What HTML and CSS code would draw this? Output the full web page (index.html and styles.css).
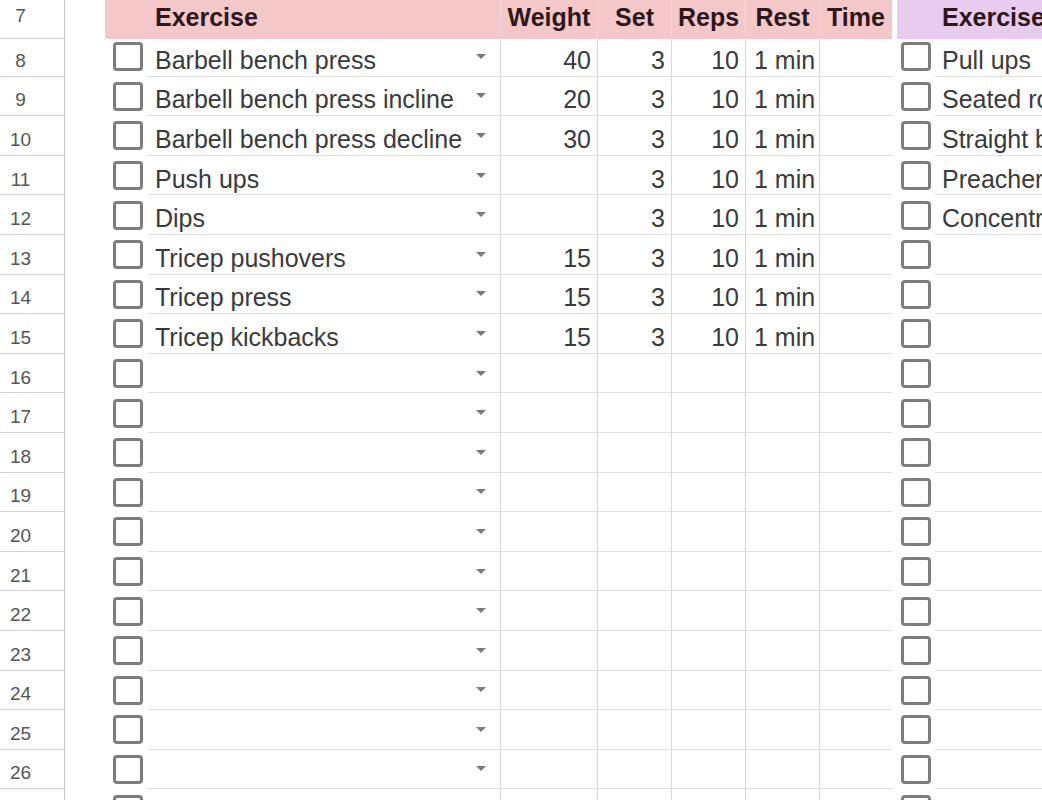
FILE: index.html
```html
<!DOCTYPE html>
<html>
<head>
<meta charset="utf-8">
<link rel="stylesheet" href="styles.css">
</head>
<body>
<div class="sheet">
  <div class="row head">
    <div class="rh"><span class="t">7</span></div>
    <div class="gap"></div>
    <div class="h pink cbh"></div>
    <div class="h pink exh"><span>Exercise</span></div>
    <div class="h pink ctr">Weight</div>
    <div class="h pink ctr">Set</div>
    <div class="h pink ctr">Reps</div>
    <div class="h pink ctr">Rest</div>
    <div class="h pink ctr last">Time</div>
    <div class="gap"></div>
    <div class="h lav cbh"></div>
    <div class="h lav exh"><span>Exercise</span></div>
  </div>

  <div class="row">
    <div class="rh"><span class="t">8</span></div><div class="gap"></div>
    <div class="cb"><span class="box"></span></div>
    <div class="c ex"><span class="t">Barbell bench press</span><span class="dd"></span></div>
    <div class="c num"><span class="t">40</span></div><div class="c num"><span class="t">3</span></div><div class="c num"><span class="t">10</span></div>
    <div class="c txt"><span class="t">1 min</span></div><div class="c time"></div><div class="gap"></div>
    <div class="cb"><span class="box"></span></div><div class="c ex2"><span class="t">Pull ups</span></div>
  </div>
  <div class="row">
    <div class="rh"><span class="t">9</span></div><div class="gap"></div>
    <div class="cb"><span class="box"></span></div>
    <div class="c ex"><span class="t">Barbell bench press incline</span><span class="dd"></span></div>
    <div class="c num"><span class="t">20</span></div><div class="c num"><span class="t">3</span></div><div class="c num"><span class="t">10</span></div>
    <div class="c txt"><span class="t">1 min</span></div><div class="c time"></div><div class="gap"></div>
    <div class="cb"><span class="box"></span></div><div class="c ex2"><span class="t">Seated row</span></div>
  </div>
  <div class="row">
    <div class="rh"><span class="t">10</span></div><div class="gap"></div>
    <div class="cb"><span class="box"></span></div>
    <div class="c ex"><span class="t">Barbell bench press decline</span><span class="dd"></span></div>
    <div class="c num"><span class="t">30</span></div><div class="c num"><span class="t">3</span></div><div class="c num"><span class="t">10</span></div>
    <div class="c txt"><span class="t">1 min</span></div><div class="c time"></div><div class="gap"></div>
    <div class="cb"><span class="box"></span></div><div class="c ex2"><span class="t">Straight bar curl</span></div>
  </div>
  <div class="row">
    <div class="rh"><span class="t">11</span></div><div class="gap"></div>
    <div class="cb"><span class="box"></span></div>
    <div class="c ex"><span class="t">Push ups</span><span class="dd"></span></div>
    <div class="c num"></div><div class="c num"><span class="t">3</span></div><div class="c num"><span class="t">10</span></div>
    <div class="c txt"><span class="t">1 min</span></div><div class="c time"></div><div class="gap"></div>
    <div class="cb"><span class="box"></span></div><div class="c ex2"><span class="t">Preacher curl</span></div>
  </div>
  <div class="row">
    <div class="rh"><span class="t">12</span></div><div class="gap"></div>
    <div class="cb"><span class="box"></span></div>
    <div class="c ex"><span class="t">Dips</span><span class="dd"></span></div>
    <div class="c num"></div><div class="c num"><span class="t">3</span></div><div class="c num"><span class="t">10</span></div>
    <div class="c txt"><span class="t">1 min</span></div><div class="c time"></div><div class="gap"></div>
    <div class="cb"><span class="box"></span></div><div class="c ex2"><span class="t">Concentration curl</span></div>
  </div>
  <div class="row">
    <div class="rh"><span class="t">13</span></div><div class="gap"></div>
    <div class="cb"><span class="box"></span></div>
    <div class="c ex"><span class="t">Tricep pushovers</span><span class="dd"></span></div>
    <div class="c num"><span class="t">15</span></div><div class="c num"><span class="t">3</span></div><div class="c num"><span class="t">10</span></div>
    <div class="c txt"><span class="t">1 min</span></div><div class="c time"></div><div class="gap"></div>
    <div class="cb"><span class="box"></span></div><div class="c ex2"></div>
  </div>
  <div class="row">
    <div class="rh"><span class="t">14</span></div><div class="gap"></div>
    <div class="cb"><span class="box"></span></div>
    <div class="c ex"><span class="t">Tricep press</span><span class="dd"></span></div>
    <div class="c num"><span class="t">15</span></div><div class="c num"><span class="t">3</span></div><div class="c num"><span class="t">10</span></div>
    <div class="c txt"><span class="t">1 min</span></div><div class="c time"></div><div class="gap"></div>
    <div class="cb"><span class="box"></span></div><div class="c ex2"></div>
  </div>
  <div class="row">
    <div class="rh"><span class="t">15</span></div><div class="gap"></div>
    <div class="cb"><span class="box"></span></div>
    <div class="c ex"><span class="t">Tricep kickbacks</span><span class="dd"></span></div>
    <div class="c num"><span class="t">15</span></div><div class="c num"><span class="t">3</span></div><div class="c num"><span class="t">10</span></div>
    <div class="c txt"><span class="t">1 min</span></div><div class="c time"></div><div class="gap"></div>
    <div class="cb"><span class="box"></span></div><div class="c ex2"></div>
  </div>

  <div class="row"><div class="rh"><span class="t">16</span></div><div class="gap"></div><div class="cb"><span class="box"></span></div><div class="c ex"><span class="dd"></span></div><div class="c num"></div><div class="c num"></div><div class="c num"></div><div class="c txt"></div><div class="c time"></div><div class="gap"></div><div class="cb"><span class="box"></span></div><div class="c ex2"></div></div>
  <div class="row"><div class="rh"><span class="t">17</span></div><div class="gap"></div><div class="cb"><span class="box"></span></div><div class="c ex"><span class="dd"></span></div><div class="c num"></div><div class="c num"></div><div class="c num"></div><div class="c txt"></div><div class="c time"></div><div class="gap"></div><div class="cb"><span class="box"></span></div><div class="c ex2"></div></div>
  <div class="row"><div class="rh"><span class="t">18</span></div><div class="gap"></div><div class="cb"><span class="box"></span></div><div class="c ex"><span class="dd"></span></div><div class="c num"></div><div class="c num"></div><div class="c num"></div><div class="c txt"></div><div class="c time"></div><div class="gap"></div><div class="cb"><span class="box"></span></div><div class="c ex2"></div></div>
  <div class="row"><div class="rh"><span class="t">19</span></div><div class="gap"></div><div class="cb"><span class="box"></span></div><div class="c ex"><span class="dd"></span></div><div class="c num"></div><div class="c num"></div><div class="c num"></div><div class="c txt"></div><div class="c time"></div><div class="gap"></div><div class="cb"><span class="box"></span></div><div class="c ex2"></div></div>
  <div class="row"><div class="rh"><span class="t">20</span></div><div class="gap"></div><div class="cb"><span class="box"></span></div><div class="c ex"><span class="dd"></span></div><div class="c num"></div><div class="c num"></div><div class="c num"></div><div class="c txt"></div><div class="c time"></div><div class="gap"></div><div class="cb"><span class="box"></span></div><div class="c ex2"></div></div>
  <div class="row"><div class="rh"><span class="t">21</span></div><div class="gap"></div><div class="cb"><span class="box"></span></div><div class="c ex"><span class="dd"></span></div><div class="c num"></div><div class="c num"></div><div class="c num"></div><div class="c txt"></div><div class="c time"></div><div class="gap"></div><div class="cb"><span class="box"></span></div><div class="c ex2"></div></div>
  <div class="row"><div class="rh"><span class="t">22</span></div><div class="gap"></div><div class="cb"><span class="box"></span></div><div class="c ex"><span class="dd"></span></div><div class="c num"></div><div class="c num"></div><div class="c num"></div><div class="c txt"></div><div class="c time"></div><div class="gap"></div><div class="cb"><span class="box"></span></div><div class="c ex2"></div></div>
  <div class="row"><div class="rh"><span class="t">23</span></div><div class="gap"></div><div class="cb"><span class="box"></span></div><div class="c ex"><span class="dd"></span></div><div class="c num"></div><div class="c num"></div><div class="c num"></div><div class="c txt"></div><div class="c time"></div><div class="gap"></div><div class="cb"><span class="box"></span></div><div class="c ex2"></div></div>
  <div class="row"><div class="rh"><span class="t">24</span></div><div class="gap"></div><div class="cb"><span class="box"></span></div><div class="c ex"><span class="dd"></span></div><div class="c num"></div><div class="c num"></div><div class="c num"></div><div class="c txt"></div><div class="c time"></div><div class="gap"></div><div class="cb"><span class="box"></span></div><div class="c ex2"></div></div>
  <div class="row"><div class="rh"><span class="t">25</span></div><div class="gap"></div><div class="cb"><span class="box"></span></div><div class="c ex"><span class="dd"></span></div><div class="c num"></div><div class="c num"></div><div class="c num"></div><div class="c txt"></div><div class="c time"></div><div class="gap"></div><div class="cb"><span class="box"></span></div><div class="c ex2"></div></div>
  <div class="row"><div class="rh"><span class="t">26</span></div><div class="gap"></div><div class="cb"><span class="box"></span></div><div class="c ex"><span class="dd"></span></div><div class="c num"></div><div class="c num"></div><div class="c num"></div><div class="c txt"></div><div class="c time"></div><div class="gap"></div><div class="cb"><span class="box"></span></div><div class="c ex2"></div></div>
  <div class="row"><div class="rh"><span class="t">27</span></div><div class="gap"></div><div class="cb"><span class="box"></span></div><div class="c ex"><span class="dd"></span></div><div class="c num"></div><div class="c num"></div><div class="c num"></div><div class="c txt"></div><div class="c time"></div><div class="gap"></div><div class="cb"><span class="box"></span></div><div class="c ex2"></div></div>
</div>
</body>
</html>
```

FILE: styles.css
```css
html, body {
  margin: 0;
  padding: 0;
  background: #ffffff;
  overflow: hidden;
}

body {
  width: 1042px;
  height: 800px;
  font-family: "Liberation Sans", Arial, sans-serif;
  color: #3a3a3a;
}

.sheet {
  display: flex;
  flex-direction: column;
  width: 1042px;
}

.row {
  display: grid;
  grid-template-columns: 65px 40px 43px 353px 97px 74px 74px 74px 72px 5px 38px 300px;
  height: 39.6px;
  font-size: 25px;
  white-space: nowrap;
}

.row.head {
  height: 37px;
}

/* row header */
.rh {
  border-right: 1px solid #c6c6c6;
  border-bottom: 1px solid #d2d2d2;
  display: flex;
  align-items: center;
  justify-content: center;
  padding-right: 23px;
  font-size: 19px;
  color: #555555;
}

.head .rh {
  height: 38px;
}

.rh .t {
  padding-top: 9px;
}

.head .rh .t {
  padding-top: 0;
  padding-bottom: 6px;
}

.gap {
  background: #ffffff;
}

/* header cells */
.h {
  display: flex;
  align-items: center;
  font-weight: bold;
  color: #2e1719;
  border-right: 1px solid #f8dadb;
  overflow: hidden;
  padding-bottom: 5px;
  box-sizing: border-box;
}

.pink {
  background: #f4c7c9;
}

.lav {
  background: #e8ccf0;
  border-right: none;
}

.cbh {
  border-right: none;
}

.exh span {
  padding-left: 7px;
}

.ctr {
  justify-content: center;
}

.last {
  border-right: none;
}

/* data cells */
.c {
  border-bottom: 1px solid #e0e0e0;
  display: flex;
  align-items: center;
  overflow: hidden;
}

.c .t {
  padding-top: 8px;
}

.ex {
  border-right: 1px solid #d9d9d9;
  padding-left: 7px;
}

.num {
  justify-content: flex-end;
  padding-right: 6px;
  border-right: 1px solid #d9d9d9;
}

.txt {
  padding-left: 8px;
  border-right: 1px solid #d9d9d9;
}

.ex2 {
  padding-left: 7px;
}

.cb {
  display: flex;
  align-items: center;
  justify-content: center;
}

.box {
  width: 24px;
  height: 23px;
  border: 3px solid #6f6f6f;
  border-radius: 4px;
  box-sizing: content-box;
  opacity: 0.9;
}

.row .cb:nth-child(3) {
  justify-content: flex-start;
  padding-left: 8px;
}

.row .cb:nth-child(11) {
  justify-content: flex-start;
  padding-left: 4px;
}

.dd {
  width: 0;
  height: 0;
  border-left: 5px solid transparent;
  border-right: 5px solid transparent;
  border-top: 5px solid #7a7a7a;
  margin-left: auto;
  margin-right: 14px;
}
```
